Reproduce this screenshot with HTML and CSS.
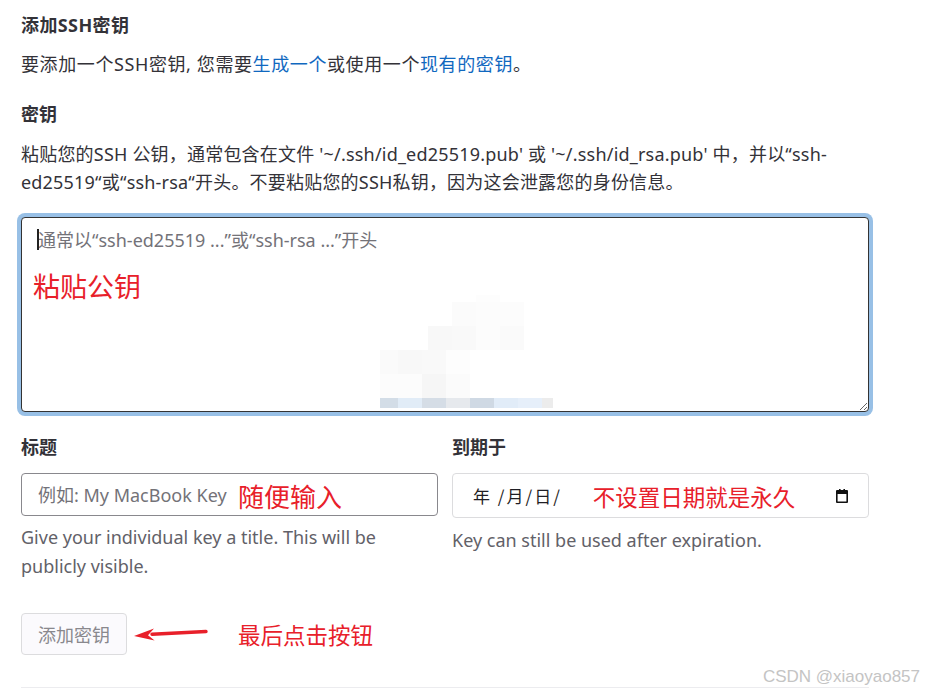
FILE: index.html
```html
<!DOCTYPE html>
<html lang="zh-CN">
<head>
    <meta charset="UTF-8">
    <meta name="viewport" content="width=device-width, initial-scale=1.0">
    <title>添加SSH密钥</title>
    <link rel="stylesheet" href="styles.css">
</head>
<body>
    <div class="page">
        <h2 class="title">添加SSH密钥</h2>
        <p class="intro">要添加一个SSH密钥, 您需要<a href="#">生成一个</a>或使用一个<a href="#">现有的密钥</a>。</p>

        <label class="field-label">密钥</label>
        <p class="desc">粘贴您的SSH 公钥，通常包含在文件 '~/.ssh/id_ed25519.pub' 或 '~/.ssh/id_rsa.pub' 中，并以“ssh-ed25519“或“ssh-rsa“开头。不要粘贴您的SSH私钥，因为这会泄露您的身份信息。</p>

        <!-- 公钥输入框 + 标注 -->
        <div class="key-box">
            <textarea class="key-input" placeholder="通常以“ssh-ed25519 ...”或“ssh-rsa ...”开头"></textarea>
            <span class="caret"></span>
            <span class="note note-key">粘贴公钥</span>
            <div class="mosaic">
                <i style="left:96px;top:0;height:7px;width:24px;background:#fdfdfd"></i>
                <i style="left:72px;top:7px;width:24px;background:#fbfbfb"></i>
                <i style="left:96px;top:7px;width:24px;background:#fcfcfc"></i>
                <i style="left:120px;top:7px;width:24px;background:#fcfcfc"></i>
                <i style="left:48px;top:31px;width:24px;background:#f8f8f8"></i>
                <i style="left:72px;top:31px;width:24px;background:#f9f9f9"></i>
                <i style="left:96px;top:31px;width:24px;background:#fcfcfc"></i>
                <i style="left:120px;top:31px;width:24px;background:#fafafa"></i>
                <i style="left:0;top:55px;width:18px;background:#fafafa"></i>
                <i style="left:18px;top:55px;width:24px;background:#f8f8f8"></i>
                <i style="left:42px;top:55px;width:24px;background:#f9f9f9"></i>
                <i style="left:66px;top:55px;width:24px;background:#fdfdfd"></i>
                <i style="left:0;top:79px;width:42px;background:#fcfcfc"></i>
                <i style="left:42px;top:79px;width:24px;background:#f6f6f6"></i>
                <i style="left:66px;top:79px;width:24px;background:#fbfbfb"></i>
                <i style="left:0;top:103px;width:18px;height:10px;background:#d3dde7"></i>
                <i style="left:18px;top:103px;width:24px;height:10px;background:#e1ecf7"></i>
                <i style="left:42px;top:103px;width:24px;height:10px;background:#d5dde6"></i>
                <i style="left:66px;top:103px;width:24px;height:10px;background:#e6e9ed"></i>
                <i style="left:90px;top:103px;width:24px;height:10px;background:#cfd9e4"></i>
                <i style="left:114px;top:103px;width:24px;height:10px;background:#e1ecf8"></i>
                <i style="left:138px;top:103px;width:24px;height:10px;background:#e6effa"></i>
                <i style="left:162px;top:103px;width:11px;height:10px;background:#ececec"></i>
            </div>
        </div>

        <div class="row">
            <div class="col">
                <label class="field-label">标题</label>
                <div class="input-wrap">
                    <input type="text" class="text-input" placeholder="例如: My MacBook Key">
                    <span class="note note-title">随便输入</span>
                </div>
                <p class="help">Give your individual key a title. This will be publicly visible.</p>
            </div>
            <div class="col">
                <label class="field-label">到期于</label>
                <div class="date-input">
                    <span class="date-text">年 /月/日/</span>
                    <span class="note note-date">不设置日期就是永久</span>
                    <svg class="cal-icon" width="16" height="16" viewBox="0 0 16 16">
                        <path d="M3 2h2V1h1.6v1h2.8V1H11v1h2a1 1 0 0 1 1 1v11a1 1 0 0 1-1 1H3a1 1 0 0 1-1-1V3a1 1 0 0 1 1-1zm0.6 4v7.4h8.8V6z" fill="#111"/>
                    </svg>
                </div>
                <p class="help help-date">Key can still be used after expiration.</p>
            </div>
        </div>

        <div class="actions">
            <button type="button" class="btn-add" disabled>添加密钥</button>
            <svg class="arrow" width="80" height="16" viewBox="0 0 80 16">
                <path d="M74 5.5 L20 8.2" stroke="#e8202a" stroke-width="3.4" stroke-linecap="round"/>
                <path d="M2 10 L22 2.5 L16 9.2 L22.6 14.5 Z" fill="#e8202a"/>
            </svg>
            <span class="note note-btn">最后点击按钮</span>
        </div>

        <hr class="divider">
    </div>
    <span class="watermark">CSDN @xiaoyao857</span>
</body>
</html>
```

FILE: styles.css
```css
body {
    margin: 0;
    background: #fff;
    color: #333238;
    font-family: "Segoe UI", "Noto Sans", "Noto Sans CJK SC", sans-serif;
    font-size: 18px;
}
.page {
    width: 848px;
    padding: 13px 0 0 21px;
}
.title {
    font-size: 18px;
    font-weight: bold;
    line-height: 25px;
    margin: 0 0 14px;
    letter-spacing: 0.4px;
}
.intro {
    line-height: 25px;
    margin: 0 0 25px;
    letter-spacing: 0.6px;
}
.intro a {
    color: #1068bf;
    text-decoration: none;
}
.field-label {
    display: block;
    font-weight: bold;
    line-height: 25px;
    margin-bottom: 13px;
}
.desc {
    line-height: 28px;
    margin: 0 0 21px;
    letter-spacing: 0.2px;
}
.key-box {
    position: relative;
}
.key-input {
    display: block;
    box-sizing: border-box;
    width: 848px;
    height: 195px;
    margin: 0;
    padding: 10px 16px;
    border: 1px solid #333;
    border-radius: 4px;
    box-shadow: 0 0 0 4px #98c0e6;
    outline: none;
    font-family: inherit;
    font-size: 18px;
    line-height: 25px;
    resize: vertical;
}
.key-input::placeholder,
.text-input::placeholder {
    color: #737278;
}
.caret {
    position: absolute;
    left: 16px;
    top: 12px;
    width: 2px;
    height: 21px;
    background: #222;
}
.note {
    color: #e8202a;
    font-family: "Noto Sans CJK SC", sans-serif;
    white-space: nowrap;
}
.note-key {
    position: absolute;
    left: 12px;
    top: 49px;
    font-size: 27px;
}
.mosaic {
    position: absolute;
    left: 359px;
    top: 78px;
    width: 173px;
    height: 114px;
}
.mosaic i {
    position: absolute;
    height: 24px;
}
.row {
    display: flex;
    gap: 14px;
    margin-top: 23px;
}
.col {
    flex: 1;
}
.input-wrap {
    position: relative;
}
.text-input {
    box-sizing: border-box;
    width: 100%;
    height: 43px;
    margin: 0;
    padding: 0 16px;
    border: 1px solid #89888d;
    border-radius: 4px;
    font-family: inherit;
    font-size: 18px;
    outline: none;
}
.note-title {
    position: absolute;
    left: 217px;
    top: 4px;
    font-size: 26px;
}
.date-input {
    display: flex;
    align-items: center;
    box-sizing: border-box;
    height: 45px;
    padding: 0 18px 0 20px;
    border: 1px solid #dcdcde;
    border-radius: 4px;
}
.date-text {
    color: #1f1e24;
    font-family: "Noto Sans CJK SC", sans-serif;
    font-size: 17px;
    letter-spacing: 2px;
}
.note-date {
    margin-left: 31px;
    font-size: 22.5px;
}
.cal-icon {
    margin-left: auto;
}
.help {
    color: #626168;
    line-height: 29px;
    margin: 7px 0 0;
    padding-right: 50px;
}
.help-date {
    margin-top: 8px;
}
.actions {
    display: flex;
    align-items: center;
    margin-top: 32px;
}
.btn-add {
    height: 42px;
    padding: 0 16px;
    background: #fbfafd;
    border: 1px solid #dcdcde;
    border-radius: 4px;
    color: #89888d;
    font-family: inherit;
    font-size: 18px;
}
.arrow {
    margin-left: 5px;
}
.note-btn {
    margin-left: 26px;
    font-size: 22.5px;
}
.divider {
    border: none;
    border-top: 1px solid #ececef;
    margin: 32px 0 0;
}
.watermark {
    position: absolute;
    right: 5px;
    top: 667px;
    color: #c4c4c4;
    font-family: "Liberation Sans", sans-serif;
    font-size: 17px;
}
```
